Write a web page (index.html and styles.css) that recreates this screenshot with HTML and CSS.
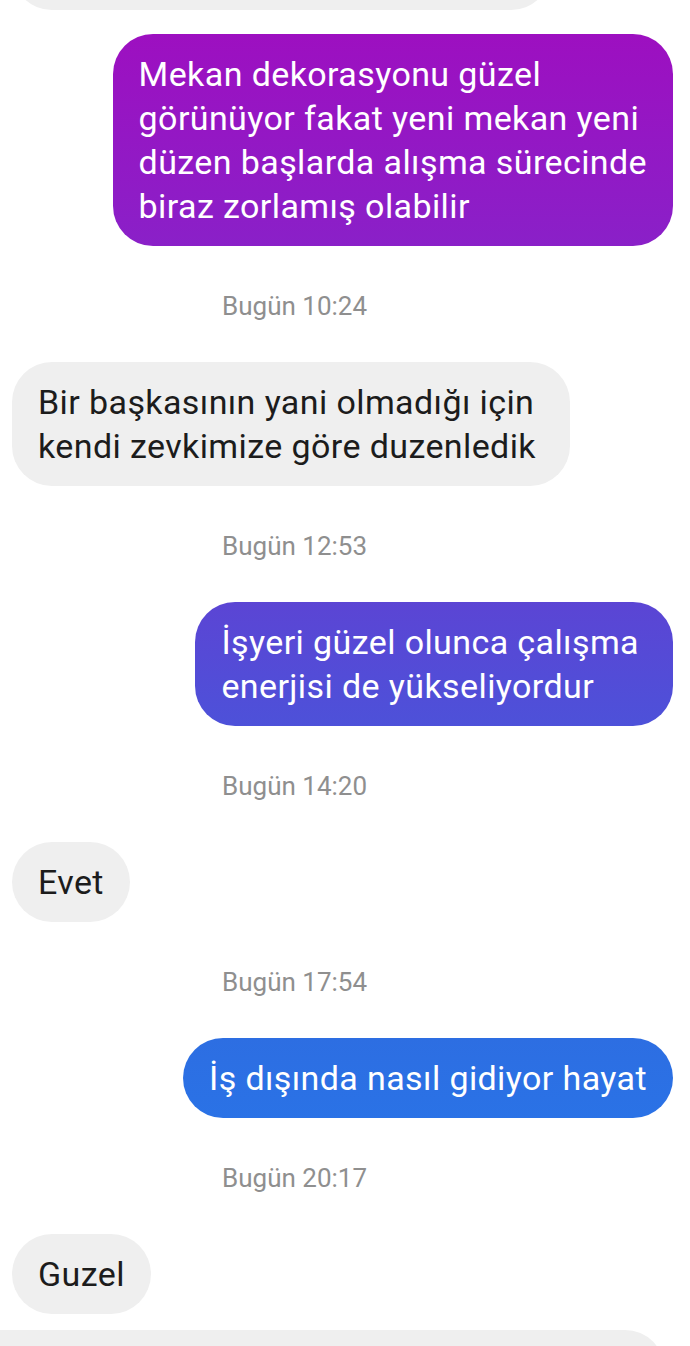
FILE: index.html
```html
<!DOCTYPE html>
<html lang="tr">

<head>
    <meta charset="UTF-8" />
    <meta name="viewport" content="width=device-width, initial-scale=1.0" />
    <title>Sohbet</title>
    <link rel="stylesheet" href="styles.css">
</head>

<body class="chat-body">
    <main class="chat">
        <div class="bubble bubble-in bubble-cut-top"></div>

        <div class="bubble bubble-out">
            Mekan dekorasyonu güzel<br />
            görünüyor fakat yeni mekan yeni<br />
            düzen başlarda alışma sürecinde<br />
            biraz zorlamış olabilir
        </div>

        <p class="stamp">Bugün 10:24</p>

        <div class="bubble bubble-in bubble-loose">
            Bir başkasının yani olmadığı için<br />
            kendi zevkimize göre duzenledik
        </div>

        <p class="stamp">Bugün 12:53</p>

        <div class="bubble bubble-out bubble-loose">
            İşyeri güzel olunca çalışma<br />
            enerjisi de yükseliyordur
        </div>

        <p class="stamp">Bugün 14:20</p>

        <div class="bubble bubble-in">Evet</div>

        <p class="stamp">Bugün 17:54</p>

        <div class="bubble bubble-out">İş dışında nasıl gidiyor hayat</div>

        <p class="stamp">Bugün 20:17</p>

        <div class="bubble bubble-in">Guzel</div>

        <div class="bubble bubble-in bubble-cut-bottom"></div>
    </main>
</body>

</html>
```

FILE: styles.css
```css
.chat-body {
    margin: 0;
    background-color: rgb(255, 255, 255);
    font-family: Roboto, "Noto Sans", sans-serif;
    overflow: hidden;
}

.chat {
    display: flex;
    flex-direction: column;
}

.bubble {
    box-sizing: border-box;
    max-width: 600px;
    padding: 18px 26px;
    border-radius: 40px;
    font-size: 34px;
    line-height: 44px;
    letter-spacing: 0.4px;
    white-space: nowrap;
}

.bubble-loose {
    padding-right: 34px;
}

.bubble-in {
    align-self: flex-start;
    margin-left: 12px;
    background-color: rgb(239, 239, 239);
    color: rgb(28, 28, 28);
}

.bubble-out {
    align-self: flex-end;
    margin-right: 17px;
    color: rgb(255, 255, 255);
    background-image: linear-gradient(180deg,
            rgb(160, 13, 191) 0px,
            rgb(138, 32, 200) 246px,
            rgb(91, 69, 212) 602px,
            rgb(77, 81, 217) 726px,
            rgb(45, 110, 226) 1038px,
            rgb(42, 114, 230) 1118px,
            rgb(38, 120, 234) 1346px);
    background-attachment: fixed;
}

.bubble-cut-top {
    width: 539px;
    height: 80px;
    margin-top: -70px;
    margin-bottom: 24px;
}

.bubble-cut-bottom {
    width: 665px;
    max-width: none;
    height: 80px;
    margin-left: 0;
    margin-top: 16px;
    border-radius: 0 40px 40px 0;
}

.stamp {
    margin: 46px 0 42px 0;
    padding-left: 222px;
    font-size: 26px;
    line-height: 28px;
    color: rgb(143, 143, 143);
}
```
